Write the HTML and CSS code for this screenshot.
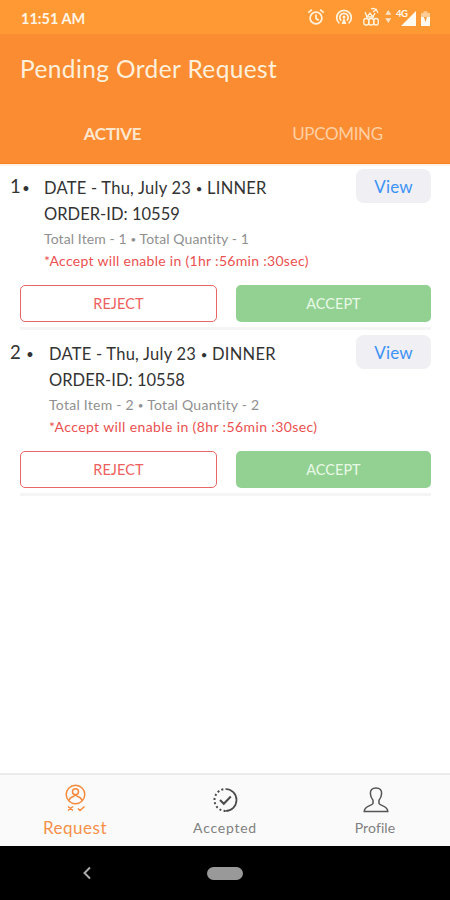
FILE: index.html
```html
<!DOCTYPE html>
<html lang="en">
<head>
<meta charset="utf-8">
<title>Pending Order Request</title>
<link rel="stylesheet" href="styles.css">
</head>
<body>
<div class="phone">
  <div class="status">
    <span class="time">11:51 AM</span>
    <svg class="status-icons" width="126" height="24" viewBox="0 0 126 24" fill="none" stroke="#fff3df" stroke-width="1.7">
      <circle cx="11" cy="12" r="5.9"/><path d="M11 8.5v4l2.7 1.7M3.3 6.7l3.6-3M18.7 6.7l-3.6-3"/>
      <path d="M34.4 17.3a7.3 7.3 0 1 1 9.2 0M36.3 14.7a4.2 4.2 0 1 1 5.4 0"/><path d="M39 11.5l-2.4 6.5h4.8z" fill="#fff3df" stroke="none"/><circle cx="39" cy="11" r="1.5" fill="#fff3df" stroke="none"/>
      <g stroke-width="1.3"><rect x="58.8" y="12.5" width="5" height="6.5" rx="2.2"/><rect x="63.8" y="12.5" width="5" height="6.5" rx="2.2"/><rect x="68.800" y="12.500" width="4.500" height="6.500" rx="2.200"/><path d="M60 6l2 5 3-4 3 4 2-4M66 3q5-2 7 4M68 6l4-3M61 11h8"/></g>
      <path d="M83.300 4l3 4.800h-6zM83.300 17l3-4.800h-6z" fill="#fbe3c9" stroke="none"/>
      <path d="M111 5v15H96z" fill="#fffaf0" stroke="none"/>
      <path d="M116 7h2.500V5.300h4V7h2.500v13h-9z" fill="#ffcc94" stroke="none"/><path d="M116 11h9v9h-9z" fill="#fffaf0" stroke="none"/><path d="M119 11h3l-1.500 5z" fill="#ff9933" stroke="none"/>
      <text x="91" y="11" class="net">4G</text>
    </svg>
  </div>
  <header class="header">
    <h1>Pending Order Request</h1>
    <nav class="tabs"><span class="tab on">ACTIVE</span><span class="tab">UPCOMING</span></nav>
  </header>
  <main class="orders">
    <section class="order">
      <div class="row">
        <div class="num">1<b>•</b></div>
        <div class="info">
          <p class="date">DATE - Thu, July 23 <i>•</i> LINNER</p>
          <p class="oid">ORDER-ID: 10559</p>
          <p class="total">Total Item - 1 <i>•</i> Total Quantity - 1</p>
          <p class="warn">*Accept will enable in (1hr :56min :30sec)</p>
        </div>
        <button class="view">View</button>
      </div>
      <div class="actions"><button class="reject">REJECT</button><button class="accept">ACCEPT</button></div>
    </section>
    <section class="order second">
      <div class="row">
        <div class="num">2<b>•</b></div>
        <div class="info">
          <p class="date">DATE - Thu, July 23 <i>•</i> DINNER</p>
          <p class="oid">ORDER-ID: 10558</p>
          <p class="total">Total Item - 2 <i>•</i> Total Quantity - 2</p>
          <p class="warn">*Accept will enable in (8hr :56min :30sec)</p>
        </div>
        <button class="view">View</button>
      </div>
      <div class="actions"><button class="reject">REJECT</button><button class="accept">ACCEPT</button></div>
    </section>
  </main>
  <nav class="bottom">
    <div class="item current">
      <svg width="30" height="32" viewBox="0 0 30 32" fill="none" stroke="#f58a3c" stroke-width="1.5">
        <circle cx="15.500" cy="11.500" r="9.300"/><circle cx="15.500" cy="8.800" r="3"/><path d="M9 17.500q.8-3 4.300-4l3.500-2.500M22 17.500q-.8-3-4.300-4l-3.500-2.500"/>
        <path d="M8 23.500l5 4M13 23.500l-5 4M18 25.500l2 2 4.500-4"/>
      </svg>
      <span>Request</span>
    </div>
    <div class="item accepted">
      <svg width="30" height="32" viewBox="0 0 30 32" fill="none" stroke="#4a4a4a" stroke-width="1.7">
        <path d="M15.500 6a11 11 0 0 1 0 22"/><path d="M15.500 28a11 11 0 0 1 0-22" stroke-width="2" stroke-dasharray="2 2.300"/><path d="M10 17l3.800 3.800 7-7.300" stroke-width="2"/>
      </svg>
      <span>Accepted</span>
    </div>
    <div class="item">
      <svg width="30" height="32" viewBox="0 0 30 32" fill="none" stroke="#555" stroke-width="1.500">
        <path d="M16 5c-4 0-5.800 2.300-5.600 5.500.1 3.200 1 5 2.600 6.800v3.200c-1.500 2.700-8.500 2-8.800 8.100h23.600c-.3-6.100-7.300-5.400-8.800-8.100v-3.200c1.600-1.800 2.500-3.600 2.600-6.800C21.800 7.300 20 5 16 5z"/>
      </svg>
      <span>Profile</span>
    </div>
  </nav>
  <div class="system">
    <svg width="10" height="14" viewBox="0 0 10 14" fill="none" stroke="#aaa" stroke-width="2"><path d="M8 1.500L2.500 7 8 12.500"/></svg>
    <i class="pill"></i><span></span>
  </div>
</div>
</body>
</html>
```

FILE: styles.css
```css
* { box-sizing: border-box; }
body { margin: 0; font-family: Lato, "Open Sans", sans-serif; background: #fff; }
h1, p { margin: 0; font-weight: 400; white-space: nowrap; }
button { font: inherit; padding: 0; border: 0; }
.phone { width: 450px; height: 900px; display: flex; flex-direction: column; overflow: hidden; }
.status { height: 34px; flex: none; background: #ff9933; display: flex; justify-content: space-between; align-items: center; padding: 1px 19px 0 21px; color: #fff5e6; }
.time { font-size: 14.5px; font-weight: 700; padding-top: 1px; }
.status-icons { display: block; }
.net { font: 700 9.5px Lato, sans-serif; fill: #fffaf0; stroke: none; letter-spacing: -.4px; }
.header { height: 130px; flex: none; background: #fb8c32; color: #fff0dc; border-bottom: 1px solid #f58220; display: flex; flex-direction: column; justify-content: space-between; }
h1 { font-size: 24.5px; line-height: 32px; letter-spacing: .38px; padding: 19px 0 0 20px; }
.tabs { display: flex; height: 59px; }
.tab { flex: 1; text-align: center; font-size: 17px; line-height: 60px; color: #ffcfa4; letter-spacing: -.35px; }
.tab.on { color: #ffe6cf; font-weight: 700; }
.orders { flex: 1; border-top: 2px solid #fdf0e5; }
.order { height: 166px; padding: 3px 0 0; }
.row { display: flex; height: 116px; padding: 0 19px 0 10px; }
.num { width: 34px; font-size: 18.5px; line-height: 34px; color: #333; }
.second .num { width: 39px; }
.num b { font-size: 11px; line-height: 0; margin-left: 2px; vertical-align: 1px; }
.second .num b { margin-left: 6px; }
.info { flex: 1; padding-top: 6px; }
.info i { font-style: normal; font-size: .7em; line-height: 0; vertical-align: 1px; }
.date, .oid { font-size: 16.5px; line-height: 26px; color: #333; letter-spacing: .25px; }
.oid { letter-spacing: .03px; }
.total { font-size: 14px; line-height: 23px; color: #909090; letter-spacing: .1px; }
.second .total { letter-spacing: .26px; }
.warn { font-size: 14px; line-height: 22px; color: #ea5050; letter-spacing: .3px; }
.second .warn { letter-spacing: .39px; }
.view { width: 75px; height: 34px; border-radius: 8px; background: #efeff4; color: #3c93f5; font-size: 17px; letter-spacing: .15px; }
.actions { display: flex; gap: 19px; height: 45px; margin: 0 19px 0 20px; border-bottom: 3px solid #f5f5f6; }
.actions button { flex: 1; height: 37px; border-radius: 5px; font-size: 14.5px; }
.actions .reject { background: #fff; border: 1.5px solid #e96666; color: #ee6060; letter-spacing: .1px; }
.actions .accept { background: #93d193; color: #e8f9e6; }
.bottom { height: 73px; flex: none; display: flex; background: #fafafa; border-top: 2px solid #ebebeb; }
.item { flex: 1; display: flex; flex-direction: column; align-items: center; padding-top: 8px; font-size: 14px; color: #808080; letter-spacing: .1px; }
.item svg { flex: none; }
.item span { line-height: 26px; }
.accepted { letter-spacing: .75px; }
.current { color: #f6904a; font-size: 17px; letter-spacing: .5px; }
.system { height: 54px; flex: none; background: #000; display: grid; grid-template-columns: 92px 1fr 92px; align-items: center; }
.system svg { justify-self: end; }
.pill { width: 36px; height: 13px; border-radius: 7px; background: #999; justify-self: center; }
```
